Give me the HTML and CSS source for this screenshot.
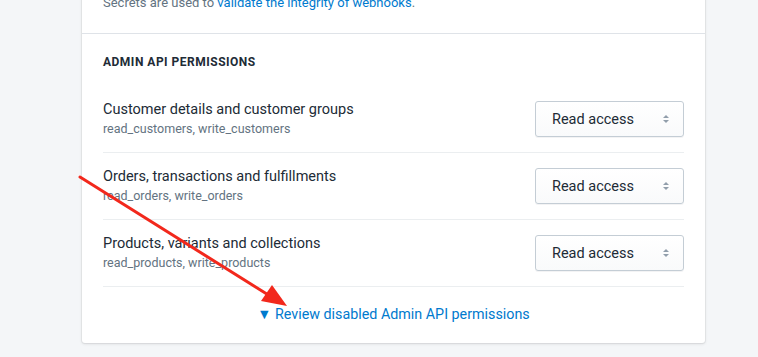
FILE: index.html
```html
<!DOCTYPE html>
<html lang="en">
<head>
  <meta charset="UTF-8" />
  <title>Admin API permissions</title>
  <link rel="stylesheet" href="styles.css">
</head>
<body>
  <div class="card">
    <div class="card-section secrets">
      <p class="muted">Secrets are used to <a href="#">validate the integrity of webhooks</a>.</p>
    </div>

    <div class="card-section">
      <h2 class="subheading">Admin API permissions</h2>

      <div class="perm-row">
        <div class="perm-text">
          <div class="perm-title">Customer details and customer groups</div>
          <div class="perm-scopes">read_customers, write_customers</div>
        </div>
        <div class="select">Read access <span class="select-arrows"></span></div>
      </div>

      <div class="perm-row">
        <div class="perm-text">
          <div class="perm-title">Orders, transactions and fulfillments</div>
          <div class="perm-scopes">read_orders, write_orders</div>
        </div>
        <div class="select">Read access <span class="select-arrows"></span></div>
      </div>

      <div class="perm-row">
        <div class="perm-text">
          <div class="perm-title">Products, variants and collections</div>
          <div class="perm-scopes">read_products, write_products</div>
        </div>
        <div class="select">Read access <span class="select-arrows"></span></div>
      </div>

      <div class="review">
        <a href="#">&#9660; Review disabled Admin API permissions</a>
      </div>
    </div>
  </div>

  <svg class="annotation" width="758" height="357" viewBox="0 0 758 357">
    <line x1="80" y1="177" x2="270" y2="296" stroke="#f2281c" stroke-width="3" stroke-linecap="round"/>
    <polygon points="287,306 261,301 272,285" fill="#f2281c"/>
  </svg>
</body>
</html>
```

FILE: styles.css
```css
body {
  margin: 0;
  background-color: #f4f6f8;
  font-family: Roboto, "Liberation Sans", sans-serif;
  color: #212b36;
  position: relative;
  height: 357px;
  overflow: hidden;
}
.card {
  margin: -14px 0 0 82px;
  width: 623px;
  background: white;
  border-radius: 0 0 3px 3px;
  box-shadow: 0 0 0 1px rgba(63, 63, 68, 0.05), 0 1px 3px 0 rgba(63, 63, 68, 0.15);
}
.card-section {
  padding: 20px 21px 0 21px;
}
.secrets {
  padding: 0 21px 13px 21px;
  border-bottom: 1px solid #dfe3e8;
}
.muted {
  margin: 0;
  font-size: 13px;
  line-height: 34px;
  color: #637381;
}
a {
  color: #007ace;
  text-decoration: none;
}
.subheading {
  margin: 0;
  font-size: 12px;
  font-weight: 700;
  letter-spacing: 0.5px;
  text-transform: uppercase;
  line-height: 16px;
  padding-bottom: 16px;
}
.perm-row {
  display: flex;
  align-items: center;
  justify-content: space-between;
  padding: 14px 0;
  border-bottom: 1px solid #ebeef0;
}
.perm-title {
  font-size: 14.5px;
  line-height: 20px;
}
.perm-scopes {
  font-size: 12.5px;
  line-height: 18px;
  color: #637381;
}
.select {
  position: relative;
  box-sizing: border-box;
  width: 149px;
  height: 36px;
  padding: 0 16px;
  border: 1px solid #c4cdd5;
  border-radius: 3px;
  background: linear-gradient(#fff, #f9fafb);
  box-shadow: 0 1px 0 rgba(22, 29, 37, 0.05);
  font-size: 14.5px;
  line-height: 35px;
}
.select-arrows {
  position: absolute;
  right: 14px;
  top: 13px;
  width: 0;
  height: 0;
  border-left: 3px solid transparent;
  border-right: 3px solid transparent;
  border-bottom: 3px solid #919eab;
}
.select-arrows::after {
  content: "";
  position: absolute;
  left: -3px;
  top: 5px;
  border-left: 3px solid transparent;
  border-right: 3px solid transparent;
  border-top: 3px solid #919eab;
}
.review {
  text-align: center;
  font-size: 14.3px;
  line-height: 20px;
  padding: 17px 0 19px 0;
}
.annotation {
  position: absolute;
  left: 0;
  top: 0;
  pointer-events: none;
}
```
